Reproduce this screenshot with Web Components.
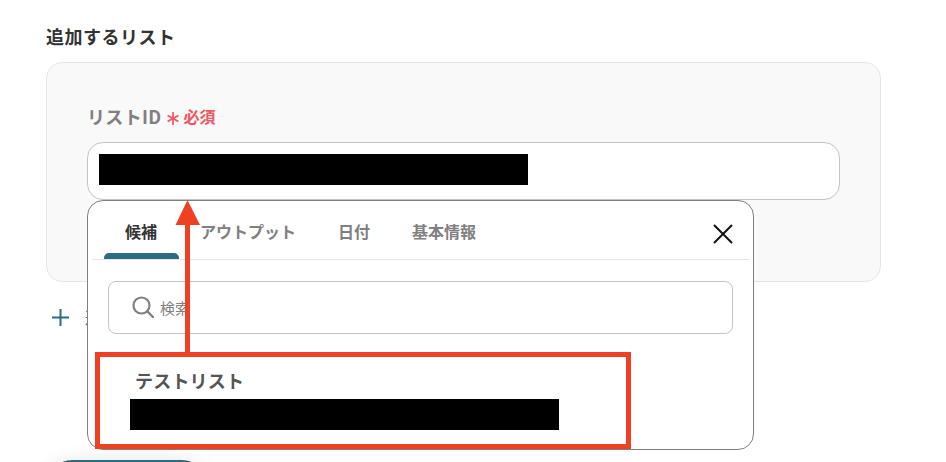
<!DOCTYPE html>
<html lang="ja">
<head>
  <meta charset="UTF-8">
  <meta name="viewport" content="width=device-width, initial-scale=1.0">
  <title>追加するリスト</title>
  <style>
    html, body { margin: 0; height: 462px; overflow: hidden; background: #fff; }
    body { font-family: "Noto Sans CJK JP", "Liberation Sans", sans-serif; }
  </style>
</head>
<body>

  <app-page>
    <span slot="title">追加するリスト</span>
    <app-field-card>
      <span slot="label">リストID</span>
      <app-popup>
        <app-tab active>候補</app-tab>
        <app-tab>アウトプット</app-tab>
        <app-tab>日付</app-tab>
        <app-tab>基本情報</app-tab>
        <span slot="search">検索</span>
        <span slot="option">テストリスト</span>
      </app-popup>
    </app-field-card>
    <span slot="add">追加</span>
  </app-page>

  <script>

    class AppPage extends HTMLElement {
      constructor() {
        super();
        this.attachShadow({ mode: 'open' });
        this.shadowRoot.innerHTML = `
          <style>
            :host {
              display: flex;
              flex-direction: column;
              position: relative;
              box-sizing: border-box;
              width: 946px;
              height: 462px;
              padding: 23px 65px 0 46px;
              overflow: hidden;
            }
            h2 {
              flex: none;
              margin: 0 0 13px;
              font-size: 18px;
              line-height: 26px;
              font-weight: 700;
              color: #333;
              letter-spacing: .5px;
            }
            .add {
              flex: none;
              display: flex;
              align-items: center;
              gap: 16px;
              height: 24px;
              margin: 23px 0 0 6px;
              color: #2f6a82;
              font-size: 16px;
            }
            .add svg { display: block; flex: none; }
            .button {
              flex: none;
              width: 158px;
              height: 48px;
              margin: 131px 0 0 2px;
              border-radius: 24px;
              background: #2f6a82;
              box-shadow: 0 0 18px rgba(0, 0, 0, .1);
            }
            .marks {
              position: absolute;
              left: 0;
              top: 0;
            }
          </style>
          <h2><slot name="title"></slot></h2>
          <slot></slot>
          <div class="add">
            <svg width="17" height="17" viewBox="0 0 17 17"><path d="M8.5 0v17M0 8.5h17" fill="none" stroke="#2f6a82" stroke-width="2"/></svg>
            <slot name="add"></slot>
          </div>
          <div class="button"></div>
          <svg class="marks" width="946" height="462" viewBox="0 0 946 462">
            <rect x="97.5" y="354.5" width="531" height="92" fill="none" stroke="#ee4123" stroke-width="5"/>
            <path d="M185 224h5v129h-5z" fill="#ee4123"/>
            <path d="M187.5 200L200 225H175.500z" fill="#ee4123"/>
          </svg>
        `;
      }
    }
    customElements.define('app-page', AppPage);

    class AppFieldCard extends HTMLElement {
      constructor() {
        super();
        this.attachShadow({ mode: 'open' });
        this.shadowRoot.innerHTML = `
          <style>
            :host {
              flex: none;
              display: block;
              box-sizing: border-box;
              height: 220px;
              padding: 41px 40px 0;
              background: #f9f9f9;
              border: 1px solid #e6e6e6;
              border-radius: 16px;
            }
            .label {
              display: flex;
              align-items: center;
              height: 24px;
              margin-bottom: 14px;
              font-size: 18px;
              font-weight: 700;
              color: #808080;
              letter-spacing: .35px;
            }
            .star { display: block; margin: 5px 5px 0 5px; flex: none; }
            .req { color: #f0565f; font-size: 16px; letter-spacing: 0; }
            .input {
              position: relative;
              box-sizing: border-box;
              height: 58px;
              padding: 11px;
              background: #fff;
              border: 1px solid #c4c4c4;
              border-radius: 16px;
            }
            .redact { width: 429px; height: 31px; background: #000; }
          </style>
          <div class="label">
            <slot name="label"></slot>
            <svg class="star" width="12" height="13" viewBox="0 0 12 13"><path d="M6 0v13M.6 3.400l10.800 6.200M11.400 3.400L.6 9.600" fill="none" stroke="#f0565f" stroke-width="1.700"/></svg>
            <span class="req">必須</span>
          </div>
          <div class="input">
            <div class="redact"></div>
            <slot></slot>
          </div>
        `;
      }
    }
    customElements.define('app-field-card', AppFieldCard);

    class AppTab extends HTMLElement {
      constructor() {
        super();
        this.attachShadow({ mode: 'open' });
        this.shadowRoot.innerHTML = `
          <style>
            :host {
              display: flex;
              position: relative;
              justify-content: center;
              box-sizing: border-box;
              height: 58px;
              padding: 18px 21px 0;
              font-size: 16px;
              line-height: 24px;
              font-weight: 700;
              color: #808080;
            }
            :host([active]) { color: #333; padding-right: 22px; }
            :host([active])::after {
              content: "";
              position: absolute;
              left: 0;
              right: 0;
              bottom: 0;
              height: 6px;
              border-radius: 5px 5px 0 0;
              background: #2f6a82;
            }
          </style>
          <slot></slot>
        `;
      }
    }
    customElements.define('app-tab', AppTab);

    class AppPopup extends HTMLElement {
      constructor() {
        super();
        this.attachShadow({ mode: 'open' });
        this.shadowRoot.innerHTML = `
          <style>
            :host {
              display: block;
              position: absolute;
              left: -1px;
              top: 57px;
              box-sizing: border-box;
              width: 667px;
              height: 250px;
              padding: 0 4px;
              background: #fff;
              border: 1px solid #808080;
              border-radius: 16px;
              overflow: hidden;
            }
            .tabs {
              display: flex;
              align-items: flex-start;
              height: 58px;
              padding-left: 12px;
              border-bottom: 1px solid #e6e6e6;
            }
            .close { display: block; margin: 23px 16px 0 auto; }
            .search {
              display: flex;
              align-items: center;
              gap: 6px;
              box-sizing: border-box;
              height: 53px;
              margin: 21px 16px 0;
              padding: 0 0 1px 23px;
              border: 1px solid #c4c4c4;
              border-radius: 8px;
              font-size: 15px;
              color: #808080;
            }
            .search svg { display: block; flex: none; }
            .option {
              margin: 33px 0 0 43px;
              font-size: 18px;
              line-height: 26px;
              font-weight: 700;
              color: #555;
              letter-spacing: .2px;
            }
            .redact { width: 429px; height: 31px; margin: 6px 0 0 38px; background: #000; }
          </style>
          <div class="tabs">
            <slot></slot>
            <svg class="close" width="20" height="20" viewBox="0 0 20 20"><path d="M1 1l18 18M19 1L1 19" fill="none" stroke="#111" stroke-width="2"/></svg>
          </div>
          <div class="search">
            <svg width="22" height="22" viewBox="0 0 22 22"><circle cx="9.500" cy="9.500" r="8" fill="none" stroke="#808080" stroke-width="2.200"/><path d="M15.300 15.300L21 21" fill="none" stroke="#808080" stroke-width="2.400" stroke-linecap="round"/></svg>
            <slot name="search"></slot>
          </div>
          <div class="option"><slot name="option"></slot></div>
          <div class="redact"></div>
        `;
      }
    }
    customElements.define('app-popup', AppPopup);

  </script>
</body>
</html>
